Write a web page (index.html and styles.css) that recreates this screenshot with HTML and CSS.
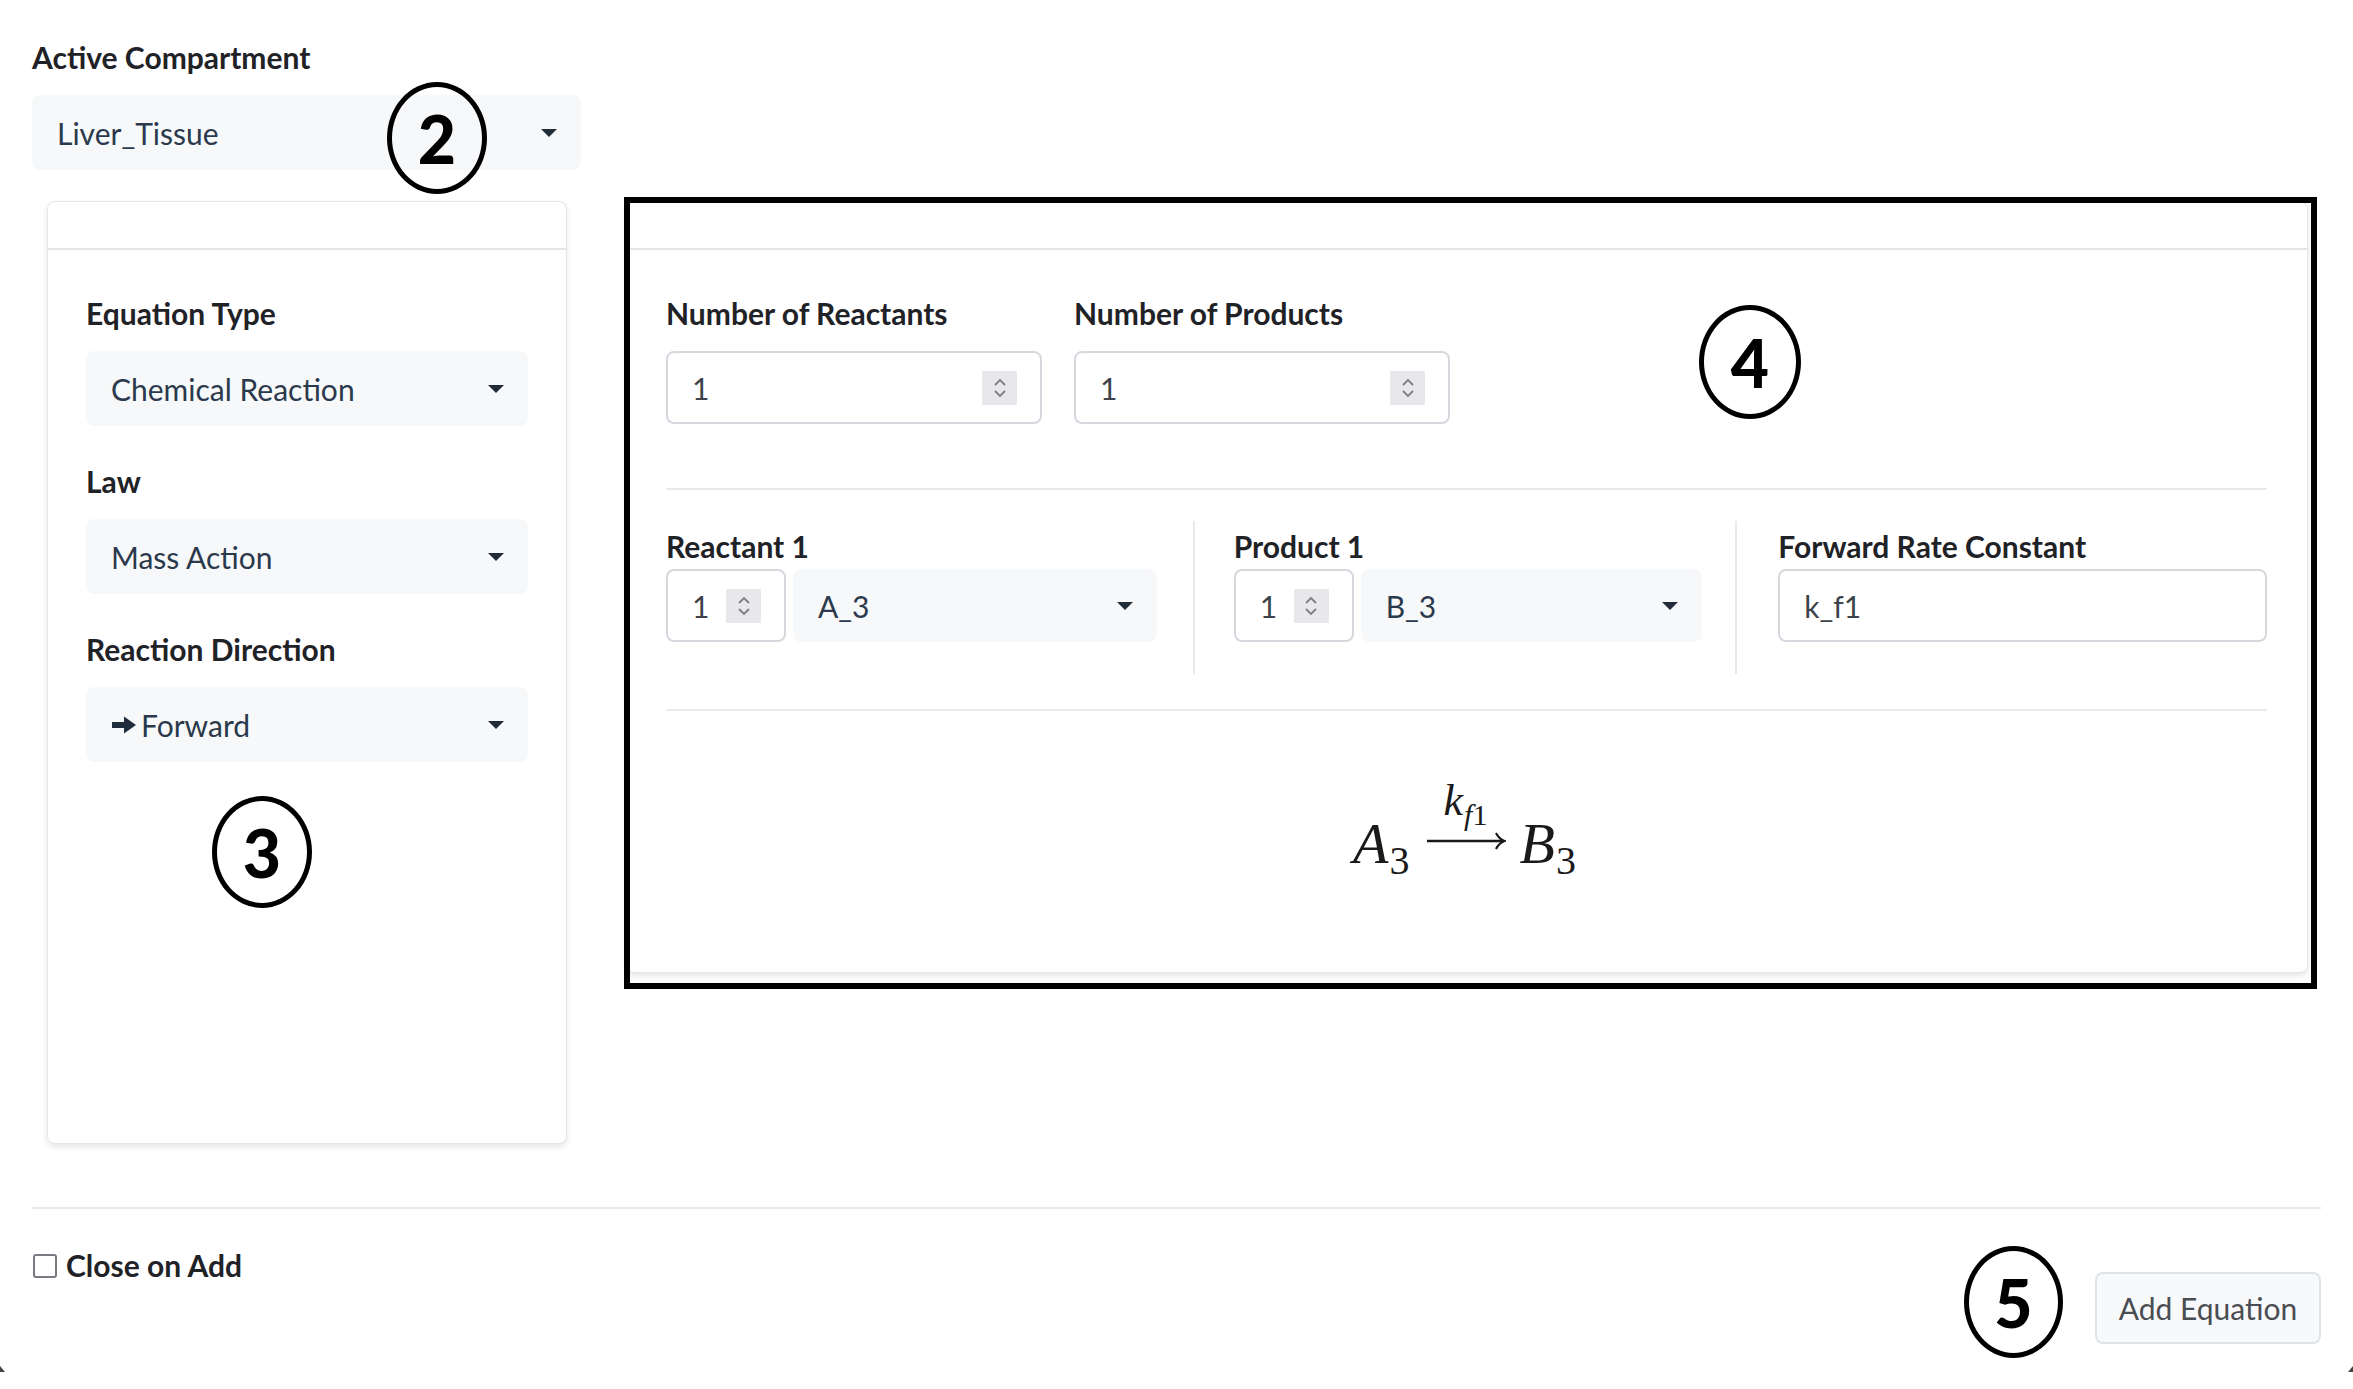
FILE: index.html
```html
<!DOCTYPE html>
<html lang="en">
<head>
<meta charset="utf-8">
<title>Add Equation</title>
<link rel="stylesheet" href="styles.css">
</head>
<body>
<div class="page">
  <div class="lbl">Active Compartment</div>
  <div class="select compart"><span>Liver_Tissue</span><i class="caret"></i></div>

  <div class="main">
    <div class="card side">
      <div class="card-head"></div>
      <div class="card-body side-body">
        <div class="lbl">Equation Type</div>
        <div class="select"><span>Chemical Reaction</span><i class="caret"></i></div>
        <div class="lbl gap">Law</div>
        <div class="select"><span>Mass Action</span><i class="caret"></i></div>
        <div class="lbl gap">Reaction Direction</div>
        <div class="select"><span class="dir"><svg class="arrow-ic" viewBox="0 0 26 20" width="26" height="20"><path d="M1 7h12V1.5L25 10 13 18.5V13H1z" fill="#1f2d3d"/></svg>Forward</span><i class="caret"></i></div>
      </div>
    </div>

    <div class="card builder">
      <div class="card-head"></div>
      <div class="card-body builder-body">
        <div class="counts">
          <div class="cnt">
            <div class="lbl">Number of Reactants</div>
            <div class="num"><span>1</span><i class="spin"><svg viewBox="0 0 14 22" width="14" height="22"><path d="M2 8l5-5 5 5M2 14l5 5 5-5" fill="none" stroke="#7d7f86" stroke-width="1.8"/></svg></i></div>
          </div>
          <div class="cnt">
            <div class="lbl">Number of Products</div>
            <div class="num"><span>1</span><i class="spin"><svg viewBox="0 0 14 22" width="14" height="22"><path d="M2 8l5-5 5 5M2 14l5 5 5-5" fill="none" stroke="#7d7f86" stroke-width="1.8"/></svg></i></div>
          </div>
        </div>
        <hr class="rule">
        <div class="species">
          <div class="sp col-r">
            <div class="lbl tight">Reactant 1</div>
            <div class="pair">
              <div class="num small"><span>1</span><i class="spin"><svg viewBox="0 0 14 22" width="14" height="22"><path d="M2 8l5-5 5 5M2 14l5 5 5-5" fill="none" stroke="#7d7f86" stroke-width="1.8"/></svg></i></div>
              <div class="select fill"><span>A_3</span><i class="caret"></i></div>
            </div>
          </div>
          <div class="vdiv d1"></div>
          <div class="sp col-p">
            <div class="lbl tight">Product 1</div>
            <div class="pair">
              <div class="num small"><span>1</span><i class="spin"><svg viewBox="0 0 14 22" width="14" height="22"><path d="M2 8l5-5 5 5M2 14l5 5 5-5" fill="none" stroke="#7d7f86" stroke-width="1.8"/></svg></i></div>
              <div class="select fill"><span>B_3</span><i class="caret"></i></div>
            </div>
          </div>
          <div class="vdiv d2"></div>
          <div class="sp col-k">
            <div class="lbl tight">Forward Rate Constant</div>
            <div class="text-in">k_f1</div>
          </div>
        </div>
        <hr class="rule">
        <div class="eq-area">
          <div class="eq">
            <span class="mi">A</span><span class="sub">3</span>
            <span class="over">
              <span class="over-top"><span class="mi k">k</span><span class="ksub"><span class="mi">f</span>1</span></span>
              <svg class="long-arrow" viewBox="0 0 80 20" width="80" height="20"><path d="M1 10H77" stroke="#1a1a1a" stroke-width="2.4" fill="none"/><path d="M70 2C72 6 74.5 8.6 78.5 10C74.5 11.4 72 14 70 18" stroke="#1a1a1a" stroke-width="2.2" fill="none"/></svg>
            </span>
            <span class="mi">B</span><span class="sub">3</span>
          </div>
        </div>
      </div>
    </div>
  </div>

  <hr class="foot-rule">
  <div class="footer">
    <label class="check"><i class="box"></i>Close on Add</label>
    <button class="btn">Add Equation</button>
  </div>

  <div class="annot-box"></div>
  <div class="badge b2">2</div>
  <div class="badge b3">3</div>
  <div class="badge b4">4</div>
  <div class="badge b5">5</div>
  <i class="corner cl"></i>
  <i class="corner cr"></i>
</div>
</body>
</html>
```

FILE: styles.css
```css
* { box-sizing: border-box; }
html, body { margin: 0; background: #fff; }
body {
  font-family: "Source Sans Pro", Lato, "Noto Sans", sans-serif;
  font-size: 30px;
  color: #212529;
}
.page {
  position: relative;
  width: 2353px;
  height: 1389px;
  padding: 35px 32px 0 32px;
}
.lbl {
  font-weight: 700;
  line-height: 45px;
  margin-bottom: 15px;
  color: #1f2226;
}
.lbl.gap { margin-top: 33px; }
.lbl.tight { margin-bottom: 0; margin-top: 3px; }

.select {
  display: flex;
  align-items: center;
  justify-content: space-between;
  height: 75px;
  background: #f7f8fa;
  border-radius: 8px;
  padding: 0 24px 0 25px;
  color: #2a3a4c;
}
.compart { width: 549px; }
.caret {
  width: 0; height: 0;
  border-left: 8px solid transparent;
  border-right: 8px solid transparent;
  border-top: 8px solid #222c38;
}
.dir { display: flex; align-items: center; }
.arrow-ic { margin-right: 4px; }

.main {
  display: flex;
  align-items: flex-start;
  margin-top: 31px;
}
.card {
  background: #fff;
  border: 1px solid #e6e7e9;
  border-radius: 8px;
  box-shadow: 0 3px 6px rgba(0,0,0,0.10);
}
.card-head {
  height: 48px;
  border-bottom: 2px solid #e4e5e7;
}
.side {
  width: 520px;
  height: 943px;
  margin-left: 15px;
}
.side-body { padding: 41px 38px 0 38px; }

.builder {
  width: 1681px;
  height: 772px;
  margin-left: 60px;
}
.builder-body { padding: 41px 40px 0 38px; }

.counts { display: flex; gap: 32px; }
.cnt { width: 376px; }
.num {
  display: flex;
  align-items: center;
  justify-content: space-between;
  height: 73px;
  border: 2px solid #d5d9de;
  border-radius: 8px;
  padding: 0 23px 0 24px;
  color: #3d434a;
  background: #fff;
}
.spin {
  width: 35px;
  height: 34px;
  background: #e8e8ec;
  display: flex;
  align-items: center;
  justify-content: center;
}
.rule {
  border: 0;
  border-top: 2px solid #e8e9eb;
  margin: 64px 0 0 0;
}
.species {
  display: flex;
  margin-top: 31px;
  height: 153px;
}
.col-r { width: 491px; }
.col-p { width: 469px; }
.col-k { width: 489px; }
.vdiv {
  width: 2px;
  background: #e8e9eb;
  align-self: stretch;
}
.d1 { margin: 0 39px 0 36px; }
.d2 { margin: 0 41px 0 33px; }
.pair { display: flex; gap: 7px; }
.num.small { width: 120px; height: 73px; padding: 0 23px 0 24px; flex: none; }
.select.fill { flex: 1; height: 73px; }
.text-in {
  height: 73px;
  border: 2px solid #d5d9de;
  border-radius: 8px;
  padding: 0 24px;
  display: flex;
  align-items: center;
  color: #3d434a;
}
.species + .rule { margin-top: 35px; }

.eq-area {
  display: flex;
  justify-content: center;
  padding-top: 68px;
  padding-right: 4px;
}
.eq {
  display: flex;
  align-items: flex-end;
  font-family: "Liberation Serif", "DejaVu Serif", serif;
  color: #1a1a1a;
  line-height: 1;
}
.mi { font-style: italic; }
.eq > .mi { font-size: 58px; }
.sub { font-size: 40px; margin-bottom: -8px; margin-left: 1px; }
.over {
  display: inline-flex;
  flex-direction: column;
  align-items: center;
  margin: 0 14px 22px 16px;
}
.over-top { font-size: 44px; display: flex; align-items: flex-end; margin-bottom: 8px; }
.ksub { font-size: 30px; margin-bottom: -7px; margin-left: 1px; }

.foot-rule {
  border: 0;
  border-top: 2px solid #e8e9eb;
  margin: 63px 0 0 0;
}
.footer {
  display: flex;
  justify-content: space-between;
  align-items: flex-start;
}
.check {
  display: flex;
  align-items: center;
  font-weight: 700;
  line-height: 45px;
  margin-top: 34px;
  color: #1f2226;
}
.box {
  width: 24px;
  height: 24px;
  border: 2px solid #7a7a85;
  border-radius: 3px;
  margin: 0 9px 0 1px;
  background: #fff;
}
.btn {
  margin-top: 63px;
  width: 226px;
  height: 72px;
  font: inherit;
  color: #4a4d52;
  background: #f8f9fa;
  border: 2px solid #e1e3e6;
  border-radius: 8px;
}

.annot-box {
  position: absolute;
  left: 624px;
  top: 197px;
  width: 1693px;
  height: 792px;
  border: 6px solid #000;
}
.badge {
  position: absolute;
  width: 100px;
  height: 112px;
  border: 5px solid #000;
  border-radius: 50%;
  display: flex;
  align-items: center;
  justify-content: center;
  font-family: Lato, "Open Sans", sans-serif;
  font-weight: 900;
  font-size: 66px;
  color: #000;
  background: transparent;
}
.b2 { left: 387px; top: 82px; }
.b3 { left: 212px; top: 796px; }
.b4 { left: 1699px; top: 305px; width: 102px; height: 114px; }
.b5 { left: 1964px; top: 1246px; width: 99px; height: 112px; }

.corner {
  position: absolute;
  width: 0; height: 0;
  top: 1366px;
}
.cl { left: 0; border-left: 5px solid #444; border-top: 6px solid transparent; }
.cr { right: 0; border-right: 5px solid #444; border-top: 6px solid transparent; }
```
